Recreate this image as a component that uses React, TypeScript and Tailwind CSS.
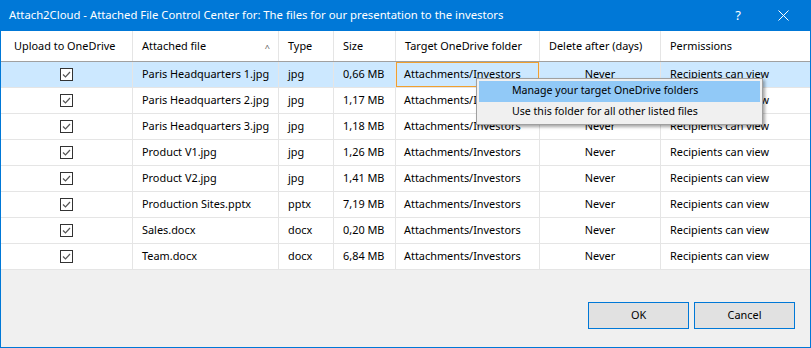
import React from "react";

const rows = [
  ["Paris Headquarters 1.jpg", "jpg", "0,66 MB"],
  ["Paris Headquarters 2.jpg", "jpg", "1,17 MB"],
  ["Paris Headquarters 3.jpg", "jpg", "1,18 MB"],
  ["Product V1.jpg", "jpg", "1,26 MB"],
  ["Product V2.jpg", "jpg", "1,41 MB"],
  ["Production Sites.pptx", "pptx", "7,19 MB"],
  ["Sales.docx", "docx", "0,20 MB"],
  ["Team.docx", "docx", "6,84 MB"],
];

const grid = "grid grid-cols-[132px_146px_55px_62px_144px_121px_149px]";

function Check() {
  return (
    <svg width="13" height="13" viewBox="0 0 13 13">
      <rect x="0.5" y="0.5" width="12" height="12" fill="white" stroke="#333" />
      <path d="M3 6.5 L5.5 9 L10 4" fill="none" stroke="#555" strokeWidth="1.2" />
    </svg>
  );
}

export default function App() {
  return (
    <div
      className="relative w-[811px] h-[348px] bg-[#f0f0f0] border border-t-0 border-[#0078d7] text-[10.9px] text-black overflow-hidden whitespace-nowrap"
      style={{ fontFamily: '"Noto Sans", "Segoe UI", sans-serif' }}
    >
      <div className="h-[31px] bg-[#0078d7] text-white flex items-center -mx-px px-[9px] text-[11.3px]">
        <span className="flex-1">
          Attach2Cloud - Attached File Control Center for: The files for our presentation to the investors
        </span>
        <span className="w-[12px] mr-[34px] text-[13px] text-center">?</span>
        <svg width="11" height="11" viewBox="0 0 11 11" className="mr-[13px]">
          <path d="M0.5 0.5 L10.5 10.5 M10.5 0.5 L0.5 10.5" stroke="white" strokeWidth="1" />
        </svg>
      </div>
      <div className="bg-white">
        <div className={`${grid} h-[31px] border-b border-[#a0a0a0]`}>
          {["Upload to OneDrive", "Attached file", "Type", "Size", "Target OneDrive folder", "Delete after (days)", "Permissions"].map((h, i) => (
            <div
              key={h}
              className={`flex items-center ${i === 0 ? "pl-[13px]" : "pl-[9px]"} ${i < 6 ? "border-r border-[#e5e5e5]" : ""} relative`}
            >
              {h}
              {i === 1 && (
                <span className="absolute right-[8px] top-[10px] text-[9px] text-[#555]">^</span>
              )}
            </div>
          ))}
        </div>
        {rows.map((r, idx) => {
          const sel = idx === 0;
          return (
            <div
              key={r[0]}
              className={`${grid} h-[26px] border-b border-[#e5e5e5] ${sel ? "bg-[#cce8ff]" : "bg-white"}`}
            >
              <div className="flex items-center justify-center border-r border-[#e5e5e5]">
                <Check />
              </div>
              <div className="flex items-center pl-[9px] border-r border-[#e5e5e5]">{r[0]}</div>
              <div className="flex items-center pl-[9px] border-r border-[#e5e5e5]">{r[1]}</div>
              <div className="flex items-center pl-[9px] border-r border-[#e5e5e5]">{r[2]}</div>
              <div
                className={`flex items-center pl-[8px] border-r border-[#e5e5e5] ${sel ? "shadow-[inset_0_0_0_1px_#f0a030]" : ""}`}
              >
                Attachments/Investors
              </div>
              <div className="flex items-center justify-center border-r border-[#e5e5e5]">Never</div>
              <div className="flex items-center pl-[9px]">Recipients can view</div>
            </div>
          );
        })}
      </div>
      <div className="flex justify-end gap-[5px] pr-[15px] pt-[32px]">
        <button className="w-[101px] h-[27px] bg-[#e1e1e1] border border-[#0078d7]">OK</button>
        <button className="w-[101px] h-[27px] bg-[#e1e1e1] border border-[#0078d7]">Cancel</button>
      </div>
      <div className="absolute left-[475px] top-[78px] w-[287px] h-[47px] bg-[#f0f0f0] border border-[#a0a0a0] shadow-[2px_2px_3px_rgba(0,0,0,0.35)] p-[2px] flex flex-col text-[10.6px]">
        <div className="h-[21px] bg-[#91c9f7] flex items-center pl-[33px]">Manage your target OneDrive folders</div>
        <div className="h-[21px] flex items-center pl-[33px]">Use this folder for all other listed files</div>
      </div>
    </div>
  );
}
